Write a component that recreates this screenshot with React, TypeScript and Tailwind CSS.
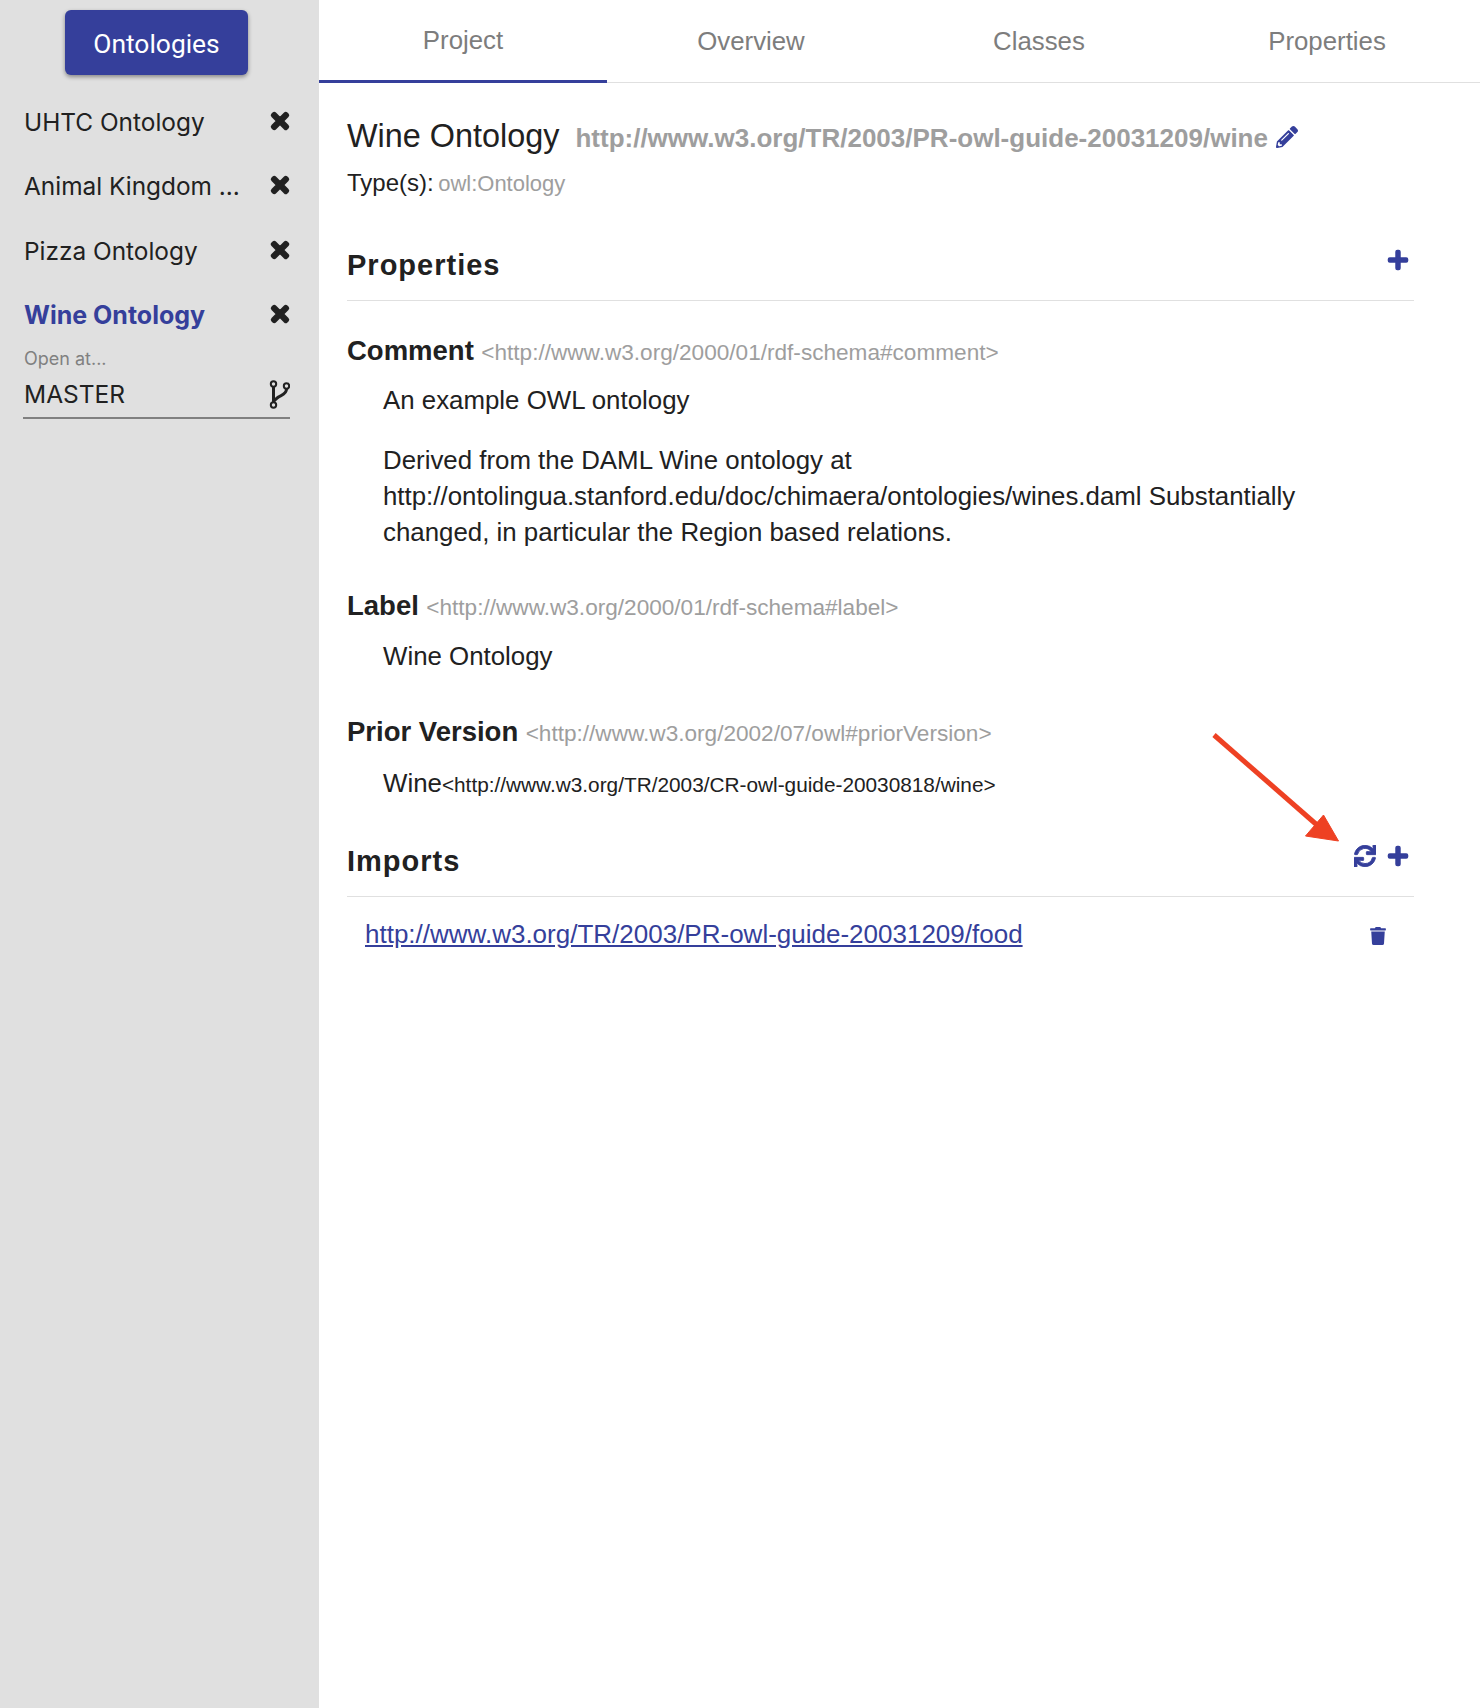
import { FaPencilAlt, FaPlus, FaSync, FaTimes, FaTrash } from "react-icons/fa";

/* ─── Icons ────────────────────────────────────────────── */
function BranchIcon() {
  return (
    <svg width="21" height="29" viewBox="0 0 21 29" fill="none" stroke="#212121" strokeWidth="2">
      <circle cx="4.500" cy="4" r="2.700" />
      <circle cx="4.500" cy="25" r="2.700" />
      <circle cx="17.500" cy="6" r="2.700" />
      <path d="M4.500 7v15" strokeWidth="3" />
      <path d="M17.500 9c0 5.500-5.500 6-8 8s-4.500 3-5 5" strokeWidth="3" />
    </svg>
  );
}

function ArrowMark() {
  return (
    <svg className="absolute left-[1205px] top-[725px]" width="145" height="125" viewBox="0 0 145 125">
      <path d="M9 10 L112 100" stroke="#ee4123" strokeWidth="5" />
      <path d="M133.500 116 L100.500 111 L118.500 90 Z" fill="#ee4123" stroke="#ee4123" strokeWidth="1" />
    </svg>
  );
}

function CloseIcon({ className }: { className: string }) {
  return <FaTimes className={className} stroke="currentColor" strokeWidth={40} />;
}

/* ─── Sidebar ──────────────────────────────────────────── */
const ONTOLOGIES = ["UHTC Ontology", "Animal Kingdom ...", "Pizza Ontology"];

function Sidebar() {
  return (
    <aside className="w-[319px] shrink-0 bg-[#e0e0e0] font-['Inter',sans-serif]">
      <div className="flex justify-center pr-[6px] pt-[10px]">
        <button className="h-[65px] w-[183px] rounded-[6px] bg-[#353f9b] pt-[4px] text-[26.400px] text-white shadow-[0_2px_4px_rgba(0,0,0,0.4)] font-['Roboto',sans-serif]">
          Ontologies
        </button>
      </div>
      <div className="mt-[15px] pl-[23px] pr-[29px]">
        {ONTOLOGIES.map((name) => (
          <div key={name} className="flex h-[64.500px] items-center justify-between pl-[1px] text-[24.400px] text-[#212121]">
            <span>{name}</span>
            <CloseIcon className="-mr-[2px] mb-[3px] text-[24px]" />
          </div>
        ))}
        <div className="flex h-[64.500px] items-center justify-between pl-[1px] text-[25px] font-bold text-[#353f9b]">
          <span>Wine Ontology</span>
          <CloseIcon className="-mr-[2px] mb-[3px] text-[24px] text-[#212121]" />
        </div>
        <div className="mt-[-1px] pl-[1px] text-[18px] leading-[24px] text-[#808080]">Open at...</div>
        <div className="mt-[3px] flex h-[45px] items-center justify-between border-b-2 border-[#808080] pb-[2px] pl-[1px] text-[24.500px] text-[#212121]">
          <span>MASTER</span>
          <BranchIcon />
        </div>
      </div>
    </aside>
  );
}

/* ─── Main ─────────────────────────────────────────────── */
const TABS = ["Project", "Overview", "Classes", "Properties"];

function Tabs() {
  return (
    <div className="grid h-[83px] grid-cols-[repeat(4,288px)] border-b border-[#e0e0e0] text-[25.800px] text-[#7d7d7d]">
      {TABS.map((tab, i) => (
        <div
          key={tab}
          className={
            i === 0
              ? "-mb-px flex items-center justify-center border-b-[3px] border-[#353f9b]"
              : "flex items-center justify-center"
          }
        >
          {tab}
        </div>
      ))}
    </div>
  );
}

function SectionHeader({ title, refresh }: { title: string; refresh?: boolean }) {
  return (
    <div className="flex h-[56px] items-start justify-between border-b border-[#e0e0e0] pr-[5px]">
      <h2 className="text-[29px] font-bold leading-[40px] tracking-[1px] text-[#212121]">{title}</h2>
      <div className="flex items-center gap-[11px] pt-[4px] text-[22px] text-[#353f9b]">
        {refresh && <FaSync stroke="currentColor" strokeWidth={20} />}
        <FaPlus stroke="currentColor" strokeWidth={30} />
      </div>
    </div>
  );
}

function PropName({ name, uri }: { name: string; uri: string }) {
  return (
    <div className="leading-[36px] text-[#212121]">
      <span className="text-[27.500px] font-bold">{name}</span>{" "}
      <span className="ml-[3px] text-[22.600px] text-[#9e9e9e]">{uri}</span>
    </div>
  );
}

export default function App() {
  return (
    <div className="relative flex h-[1708px] w-[1480px] bg-white font-['Liberation_Sans',sans-serif]">
      <Sidebar />
      <main className="min-w-0 flex-1">
        <Tabs />
        <div className="pl-[28px] pr-[66px]">
          <div className="mt-[33px] flex items-baseline text-[#212121]">
            <h1 className="text-[32.400px] leading-[40px]">Wine Ontology</h1>
            <span className="ml-[16px] text-[26px] font-bold text-[#9e9e9e]">
              http://www.w3.org/TR/2003/PR-owl-guide-20031209/wine
            </span>
            <FaPencilAlt className="ml-[8px] self-center text-[22px] text-[#353f9b]" />
          </div>
          <div className="mt-[9px] leading-[32px] text-[#212121]">
            <span className="text-[24px]">Type(s):</span>{" "}
            <span className="text-[22px] text-[#9e9e9e]">owl:Ontology</span>
          </div>

          <div className="mt-[43px]">
            <SectionHeader title="Properties" />
          </div>

          <div className="mt-[32px]">
            <PropName name="Comment" uri="<http://www.w3.org/2000/01/rdf-schema#comment>" />
            <div className="mt-[9px] pl-[36px] text-[25.850px] leading-[36px] text-[#212121]">
              <p>An example OWL ontology</p>
              <p className="mt-[24px]">
                Derived from the DAML Wine ontology at
                <br />
                http://ontolingua.stanford.edu/doc/chimaera/ontologies/wines.daml Substantially
                <br />
                changed, in particular the Region based relations.
              </p>
            </div>
          </div>

          <div className="mt-[38px]">
            <PropName name="Label" uri="<http://www.w3.org/2000/01/rdf-schema#label>" />
            <p className="mt-[10px] pl-[36px] text-[25.850px] leading-[36px] text-[#212121]">Wine Ontology</p>
          </div>

          <div className="mt-[40px]">
            <PropName name="Prior Version" uri="<http://www.w3.org/2002/07/owl#priorVersion>" />
            <p className="mt-[11px] pl-[36px] leading-[36px] text-[#212121]">
              <span className="text-[25.850px]">Wine</span>
              <span className="text-[20.800px]">&lt;http://www.w3.org/TR/2003/CR-owl-guide-20030818/wine&gt;</span>
            </p>
          </div>

          <div className="mt-[36px]">
            <SectionHeader title="Imports" refresh />
          </div>
          <div className="flex items-center justify-between pl-[18px] pr-[27px] pt-[19px]">
            <a className="text-[26px] leading-[36px] text-[#353f9b] underline">
              http://www.w3.org/TR/2003/PR-owl-guide-20031209/food
            </a>
            <FaTrash className="mt-[4px] text-[18px] text-[#353f9b]" />
          </div>
        </div>
      </main>
      <ArrowMark />
    </div>
  );
}
